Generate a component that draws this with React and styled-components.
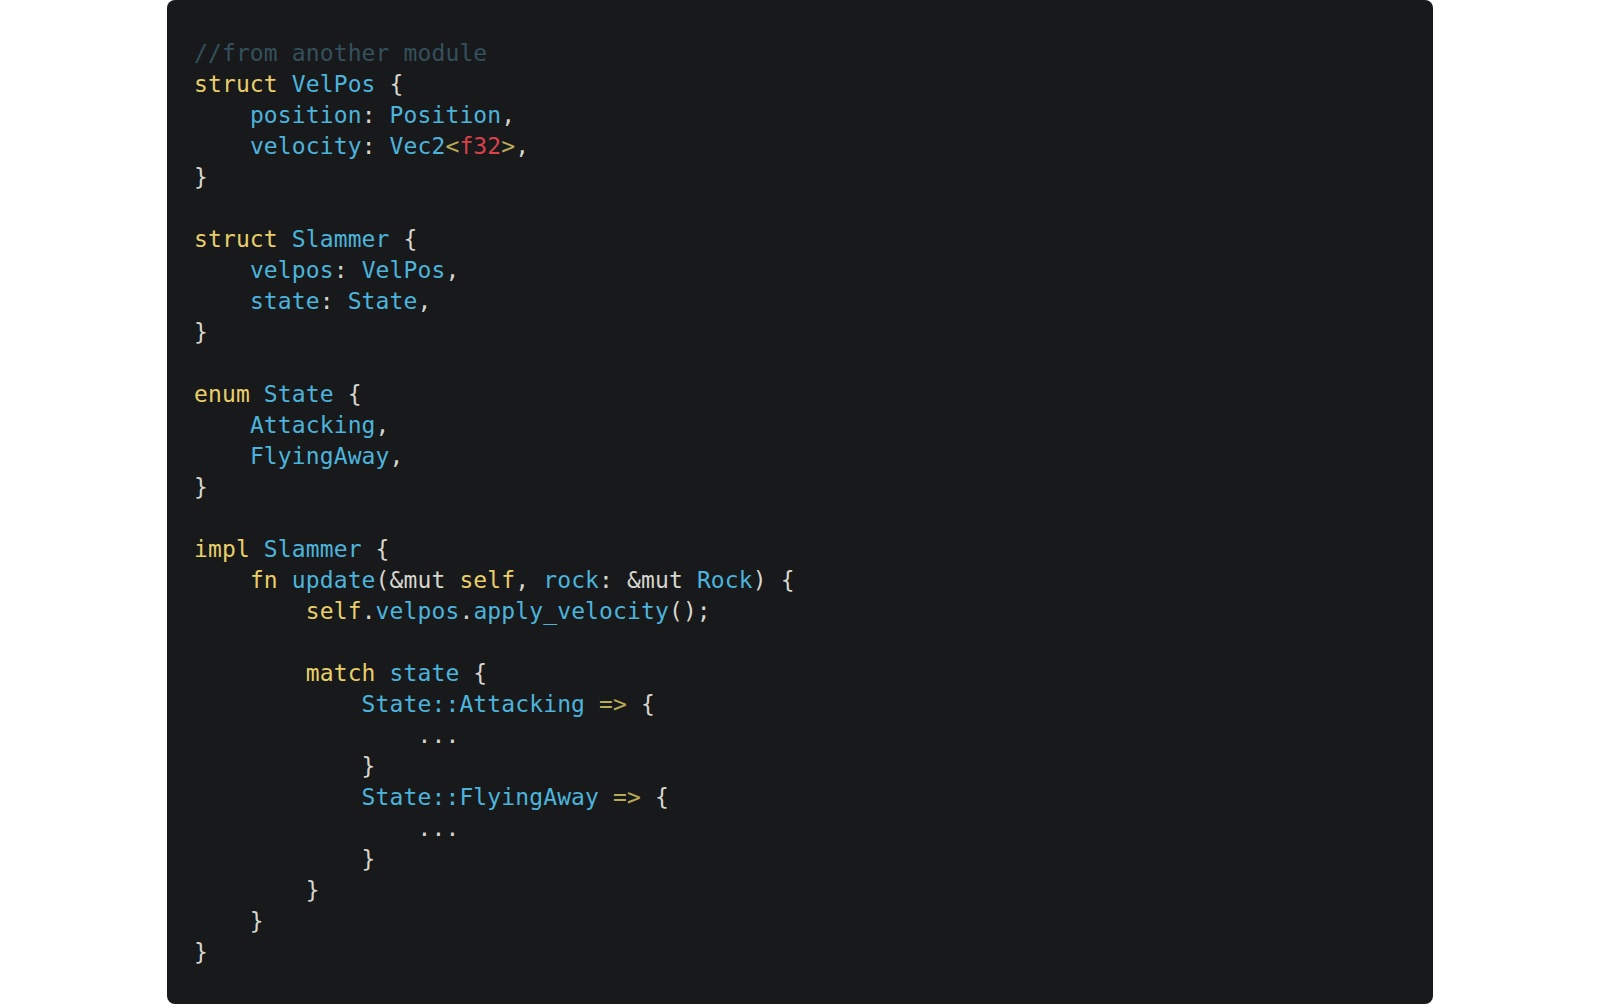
import React from 'react';
import styled, { createGlobalStyle } from 'styled-components';

const GlobalStyle = createGlobalStyle`
  html, body {
    margin: 0;
    padding: 0;
    background: #ffffff;
  }
`;

const Page = styled.div`
  width: 100%;
  display: flex;
  justify-content: center;
`;

const CodeCard = styled.pre`
  box-sizing: border-box;
  width: 1266px;
  height: 1004px;
  margin: 0;
  padding: 38px 27px;
  background-color: #18191b;
  border-radius: 8px;
  font-family: "DejaVu Sans Mono", "Liberation Mono", monospace;
  font-size: 23px;
  letter-spacing: 0.12px;
  line-height: 31px;
  color: #d6d6ce;
  overflow: hidden;
`;

const Line = styled.div`
  height: 31px;
  white-space: pre;
`;

const colors = {
  kw: '#e8cf6a',
  id: '#4cb4dc',
  num: '#d8414a',
  op: '#b8aa58',
  cm: '#34505c',
  p: '#d6d6ce',
};

const Tok = styled.span`
  color: ${(p) => colors[p.$k] || colors.p};
`;

// each line: list of [kind, text]
const code = [
  [['cm', '//from another module']],
  [['kw', 'struct'], ['p', ' '], ['id', 'VelPos'], ['p', ' {']],
  [['p', '    '], ['id', 'position'], ['p', ': '], ['id', 'Position'], ['p', ',']],
  [['p', '    '], ['id', 'velocity'], ['p', ': '], ['id', 'Vec2'], ['op', '<'], ['num', 'f32'], ['op', '>'], ['p', ',']],
  [['p', '}']],
  [],
  [['kw', 'struct'], ['p', ' '], ['id', 'Slammer'], ['p', ' {']],
  [['p', '    '], ['id', 'velpos'], ['p', ': '], ['id', 'VelPos'], ['p', ',']],
  [['p', '    '], ['id', 'state'], ['p', ': '], ['id', 'State'], ['p', ',']],
  [['p', '}']],
  [],
  [['kw', 'enum'], ['p', ' '], ['id', 'State'], ['p', ' {']],
  [['p', '    '], ['id', 'Attacking'], ['p', ',']],
  [['p', '    '], ['id', 'FlyingAway'], ['p', ',']],
  [['p', '}']],
  [],
  [['kw', 'impl'], ['p', ' '], ['id', 'Slammer'], ['p', ' {']],
  [
    ['p', '    '], ['kw', 'fn'], ['p', ' '], ['id', 'update'], ['p', '(&mut '], ['kw', 'self'],
    ['p', ', '], ['id', 'rock'], ['p', ': &mut '], ['id', 'Rock'], ['p', ') {'],
  ],
  [
    ['p', '        '], ['kw', 'self'], ['p', '.'], ['id', 'velpos'], ['p', '.'],
    ['id', 'apply_velocity'], ['p', '();'],
  ],
  [],
  [['p', '        '], ['kw', 'match'], ['p', ' '], ['id', 'state'], ['p', ' {']],
  [['p', '            '], ['id', 'State::Attacking'], ['p', ' '], ['op', '=>'], ['p', ' {']],
  [['p', '                ...']],
  [['p', '            }']],
  [['p', '            '], ['id', 'State::FlyingAway'], ['p', ' '], ['op', '=>'], ['p', ' {']],
  [['p', '                ...']],
  [['p', '            }']],
  [['p', '        }']],
  [['p', '    }']],
  [['p', '}']],
];

const App = () => (
  <Page>
    <GlobalStyle />
    <CodeCard>
      {code.map((line, i) => (
        <Line key={i}>
          {line.map(([k, t], j) => (
            <Tok key={j} $k={k}>{t}</Tok>
          ))}
        </Line>
      ))}
    </CodeCard>
  </Page>
);

export default App;
